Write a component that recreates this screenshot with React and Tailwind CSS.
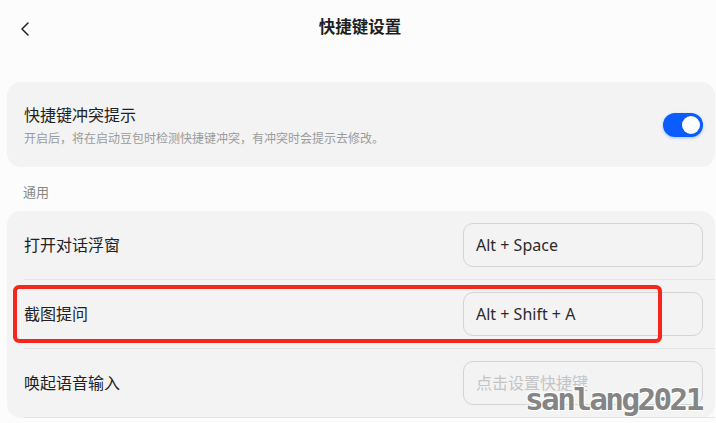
import { ChevronLeft } from 'lucide-react'

const FONT = '"Noto Sans", "Noto Sans CJK SC", sans-serif'

const SHORTCUTS = [
    { label: '打开对话浮窗', keys: 'Alt + Space' },
    { label: '截图提问', keys: 'Alt + Shift + A' },
    { label: '唤起语音输入', keys: '' },
]

function Toggle() {
    return (
        <div className="w-[40px] h-[24px] rounded-full bg-[#0a5cff] flex items-center justify-end px-[3px] shadow-[0_1px_3px_rgba(10,92,255,0.35)]">
            <div className="w-[18px] h-[18px] rounded-full bg-white" />
        </div>
    )
}

function ShortcutRow({ label, keys }) {
    return (
        <div className="ml-[17px] pr-3 py-3 flex items-center justify-between border-b border-[#e3e3e3]">
            <span className="text-[16px] text-[#222]">{label}</span>
            <div className="w-[240px] h-[44px] rounded-[10px] border border-[#d4d4d4] flex items-center px-[12px]">
                {keys
                    ? <span className="text-[16px] text-[#2a2a2a]">{keys}</span>
                    : <span className="text-[16px] text-[#c4c4c4]">点击设置快捷键</span>}
            </div>
        </div>
    )
}

export default function App() {
    return (
        <div className="relative w-[716px] h-[423px] overflow-hidden bg-[#fcfcfc]" style={{ fontFamily: FONT }}>
            {/* header */}
            <div className="relative h-[56px] flex items-center justify-center">
                <ChevronLeft size={24} strokeWidth={1.5} className="absolute left-[13px] top-[17px] text-[#222]" />
                <h1 className="text-[16.5px] font-semibold text-[#1f1f1f] -mt-[2px] ml-[4px]">快捷键设置</h1>
            </div>

            <div className="pl-[7px] pr-[1px] pt-[26px]">
                {/* conflict toggle */}
                <div className="h-[85px] rounded-[14px] bg-[#f3f3f3] pl-[17px] pr-3 flex items-center justify-between">
                    <div className="flex flex-col pt-[2px]">
                        <span className="text-[16px] text-[#222] leading-[22px]">快捷键冲突提示</span>
                        <span className="text-[12px] text-[#9b9b9b] leading-[18px] mt-[4px]">开启后，将在启动豆包时检测快捷键冲突，有冲突时会提示去修改。</span>
                    </div>
                    <Toggle />
                </div>

                <div className="pl-[16px] pt-[16px] pb-[10px] text-[13px] leading-[18px] text-[#888]">通用</div>

                <div className="rounded-[14px] bg-[#f3f3f3]">
                    {SHORTCUTS.map(s => <ShortcutRow key={s.label} {...s} />)}
                </div>
            </div>

            {/* annotation */}
            <div className="absolute left-[13px] top-[285px] w-[649px] h-[58px] rounded-[6px] border-[4px] border-[#f5261e]" />

            {/* watermark */}
            <div className="absolute left-[525px] top-[378px] text-[31px] leading-[42px] tracking-[-2.6px] font-bold text-[#858585] [text-shadow:1px_1px_0_#fff,-1px_-1px_0_#fff,1px_-1px_0_#fff,-1px_1px_0_#fff]"
                style={{ fontFamily: '"DejaVu Sans Mono", monospace' }}>
                sanlang2021
            </div>
        </div>
    )
}
